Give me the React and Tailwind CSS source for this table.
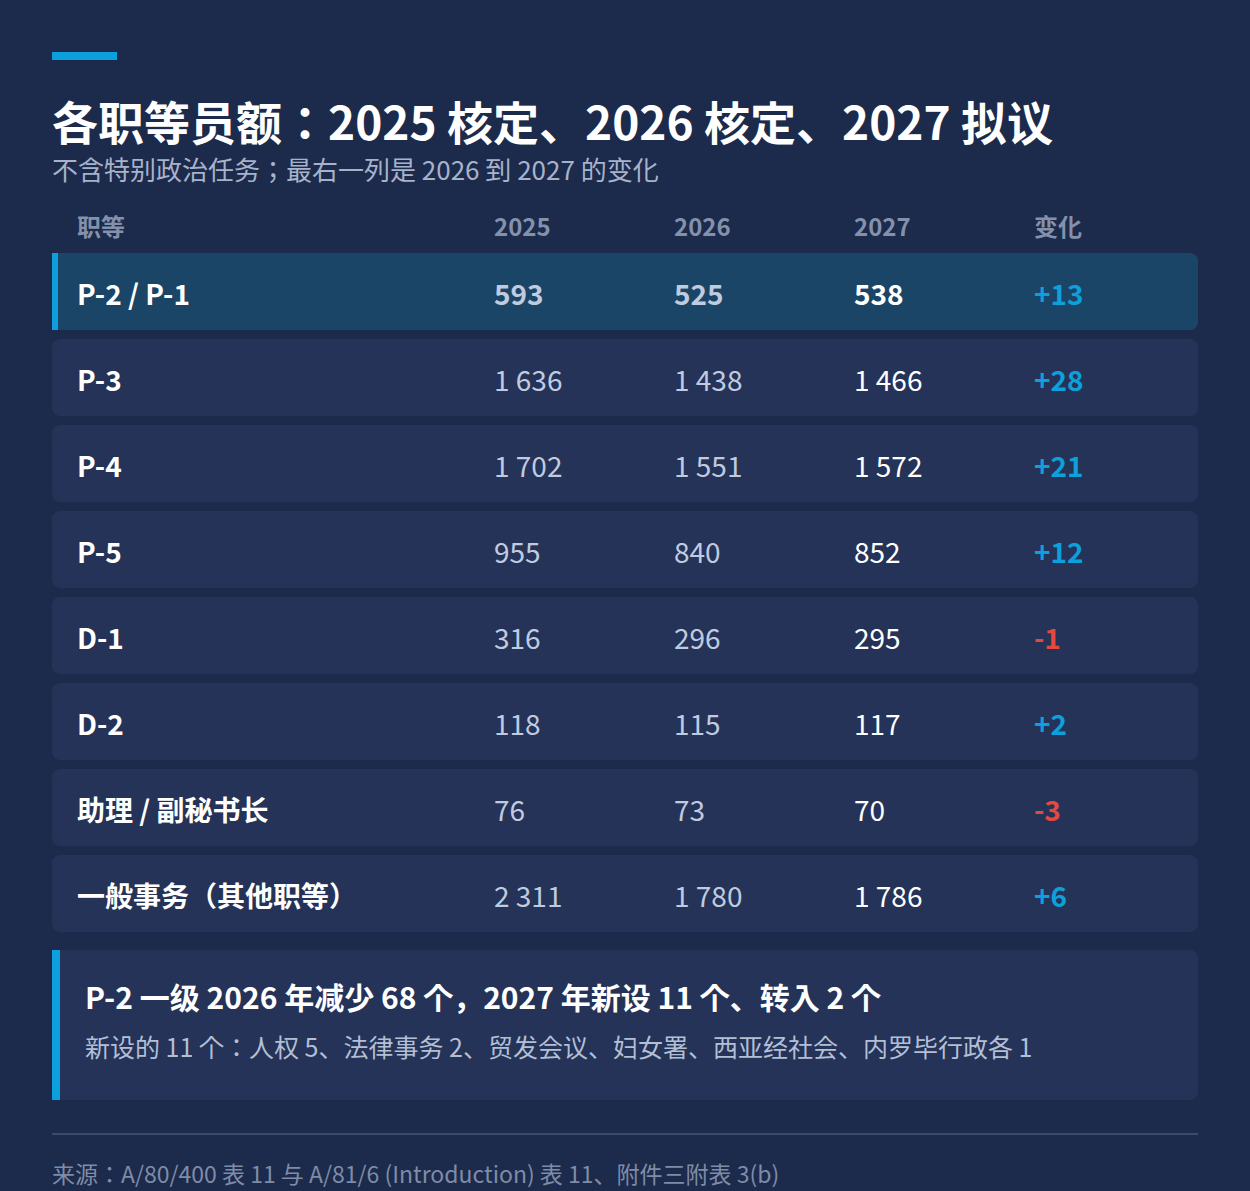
import React from 'react';

const rows = [
  { grade: 'P-2 / P-1', a: '593', b: '525', c: '538', d: '+13', hl: true },
  { grade: 'P-3', a: '1 636', b: '1 438', c: '1 466', d: '+28' },
  { grade: 'P-4', a: '1 702', b: '1 551', c: '1 572', d: '+21' },
  { grade: 'P-5', a: '955', b: '840', c: '852', d: '+12' },
  { grade: 'D-1', a: '316', b: '296', c: '295', d: '-1' },
  { grade: 'D-2', a: '118', b: '115', c: '117', d: '+2' },
  { grade: '助理 / 副秘书长', a: '76', b: '73', c: '70', d: '-3' },
  { grade: '一般事务（其他职等）', a: '2 311', b: '1 780', c: '1 786', d: '+6' },
];

export default function App() {
  return (
    <div
      className="min-h-[1191px] bg-[#1c2a4b] px-[52px] pt-[52px] pb-10 text-white"
      style={{ fontFamily: '"Noto Sans CJK JP", "Noto Sans CJK SC", "Noto Sans", sans-serif' }}
    >
      <div className="h-[8px] w-[65px] bg-[#0ea0dc]"></div>

      <h1 className="mt-[30px] text-[46px] font-bold leading-[60px]">
        各职等员额：2025 核定、2026 核定、2027 拟议
      </h1>
      <p className="mt-[1px] text-[26px] leading-[36px] text-[#a6b3cb]">
        不含特别政治任务；最右一列是 2026 到 2027 的变化
      </p>

      {/* 表头 */}
      <div className="mt-[19px] grid h-[40px] grid-cols-[417px_180px_180px_180px_1fr] items-center px-[25px] text-[24px] font-bold text-[#8391ab]">
        <span>职等</span>
        <span>2025</span>
        <span>2026</span>
        <span>2027</span>
        <span>变化</span>
      </div>

      <div className="mt-[7px] flex flex-col gap-[9px]">
        {rows.map(r => {
          const neg = r.d.startsWith('-');
          return (
            <div
              key={r.grade}
              className={`grid h-[77px] grid-cols-[417px_180px_180px_180px_1fr] items-center pt-[2px] text-[28px] ${
                r.hl
                  ? 'rounded-r-lg border-l-[6px] border-[#0ea0dc] bg-[#1b4566] pl-[19px]'
                  : 'rounded-lg bg-[#243357] pl-[25px]'
              }`}
            >
              <span className="font-bold text-white">{r.grade}</span>
              <span className={`text-[#c0cbe0] ${r.hl ? 'font-bold' : ''}`}>{r.a}</span>
              <span className={`text-[#c0cbe0] ${r.hl ? 'font-bold' : ''}`}>{r.b}</span>
              <span className={`text-white ${r.hl ? 'font-bold' : ''}`}>{r.c}</span>
              <span className={`font-bold ${neg ? 'text-[#e5483f]' : 'text-[#0ea0dc]'}`}>{r.d}</span>
            </div>
          );
        })}
      </div>

      {/* 说明 */}
      <div className="mt-[18px] h-[150px] rounded-r-lg border-l-[8px] border-[#0ea0dc] bg-[#243357] pl-[25px] pt-[25px]">
        <p className="text-[30px] font-bold leading-[42px] text-white">
          P-2 一级 2026 年减少 68 个，2027 年新设 11 个、转入 2 个
        </p>
        <p className="mt-[12px] text-[25px] leading-[34px] text-[#b3bfd5]">
          新设的 11 个：人权 5、法律事务 2、贸发会议、妇女署、西亚经社会、内罗毕行政各 1
        </p>
      </div>

      <div className="mt-[33px] h-[2px] bg-[#3a4a6d]"></div>

      <p className="mt-[22px] text-[23px] leading-[32px] text-[#7f8ca7]">
        来源：A/80/400 表 11 与 A/81/6 (Introduction) 表 11、附件三附表 3(b)
      </p>
    </div>
  );
}
